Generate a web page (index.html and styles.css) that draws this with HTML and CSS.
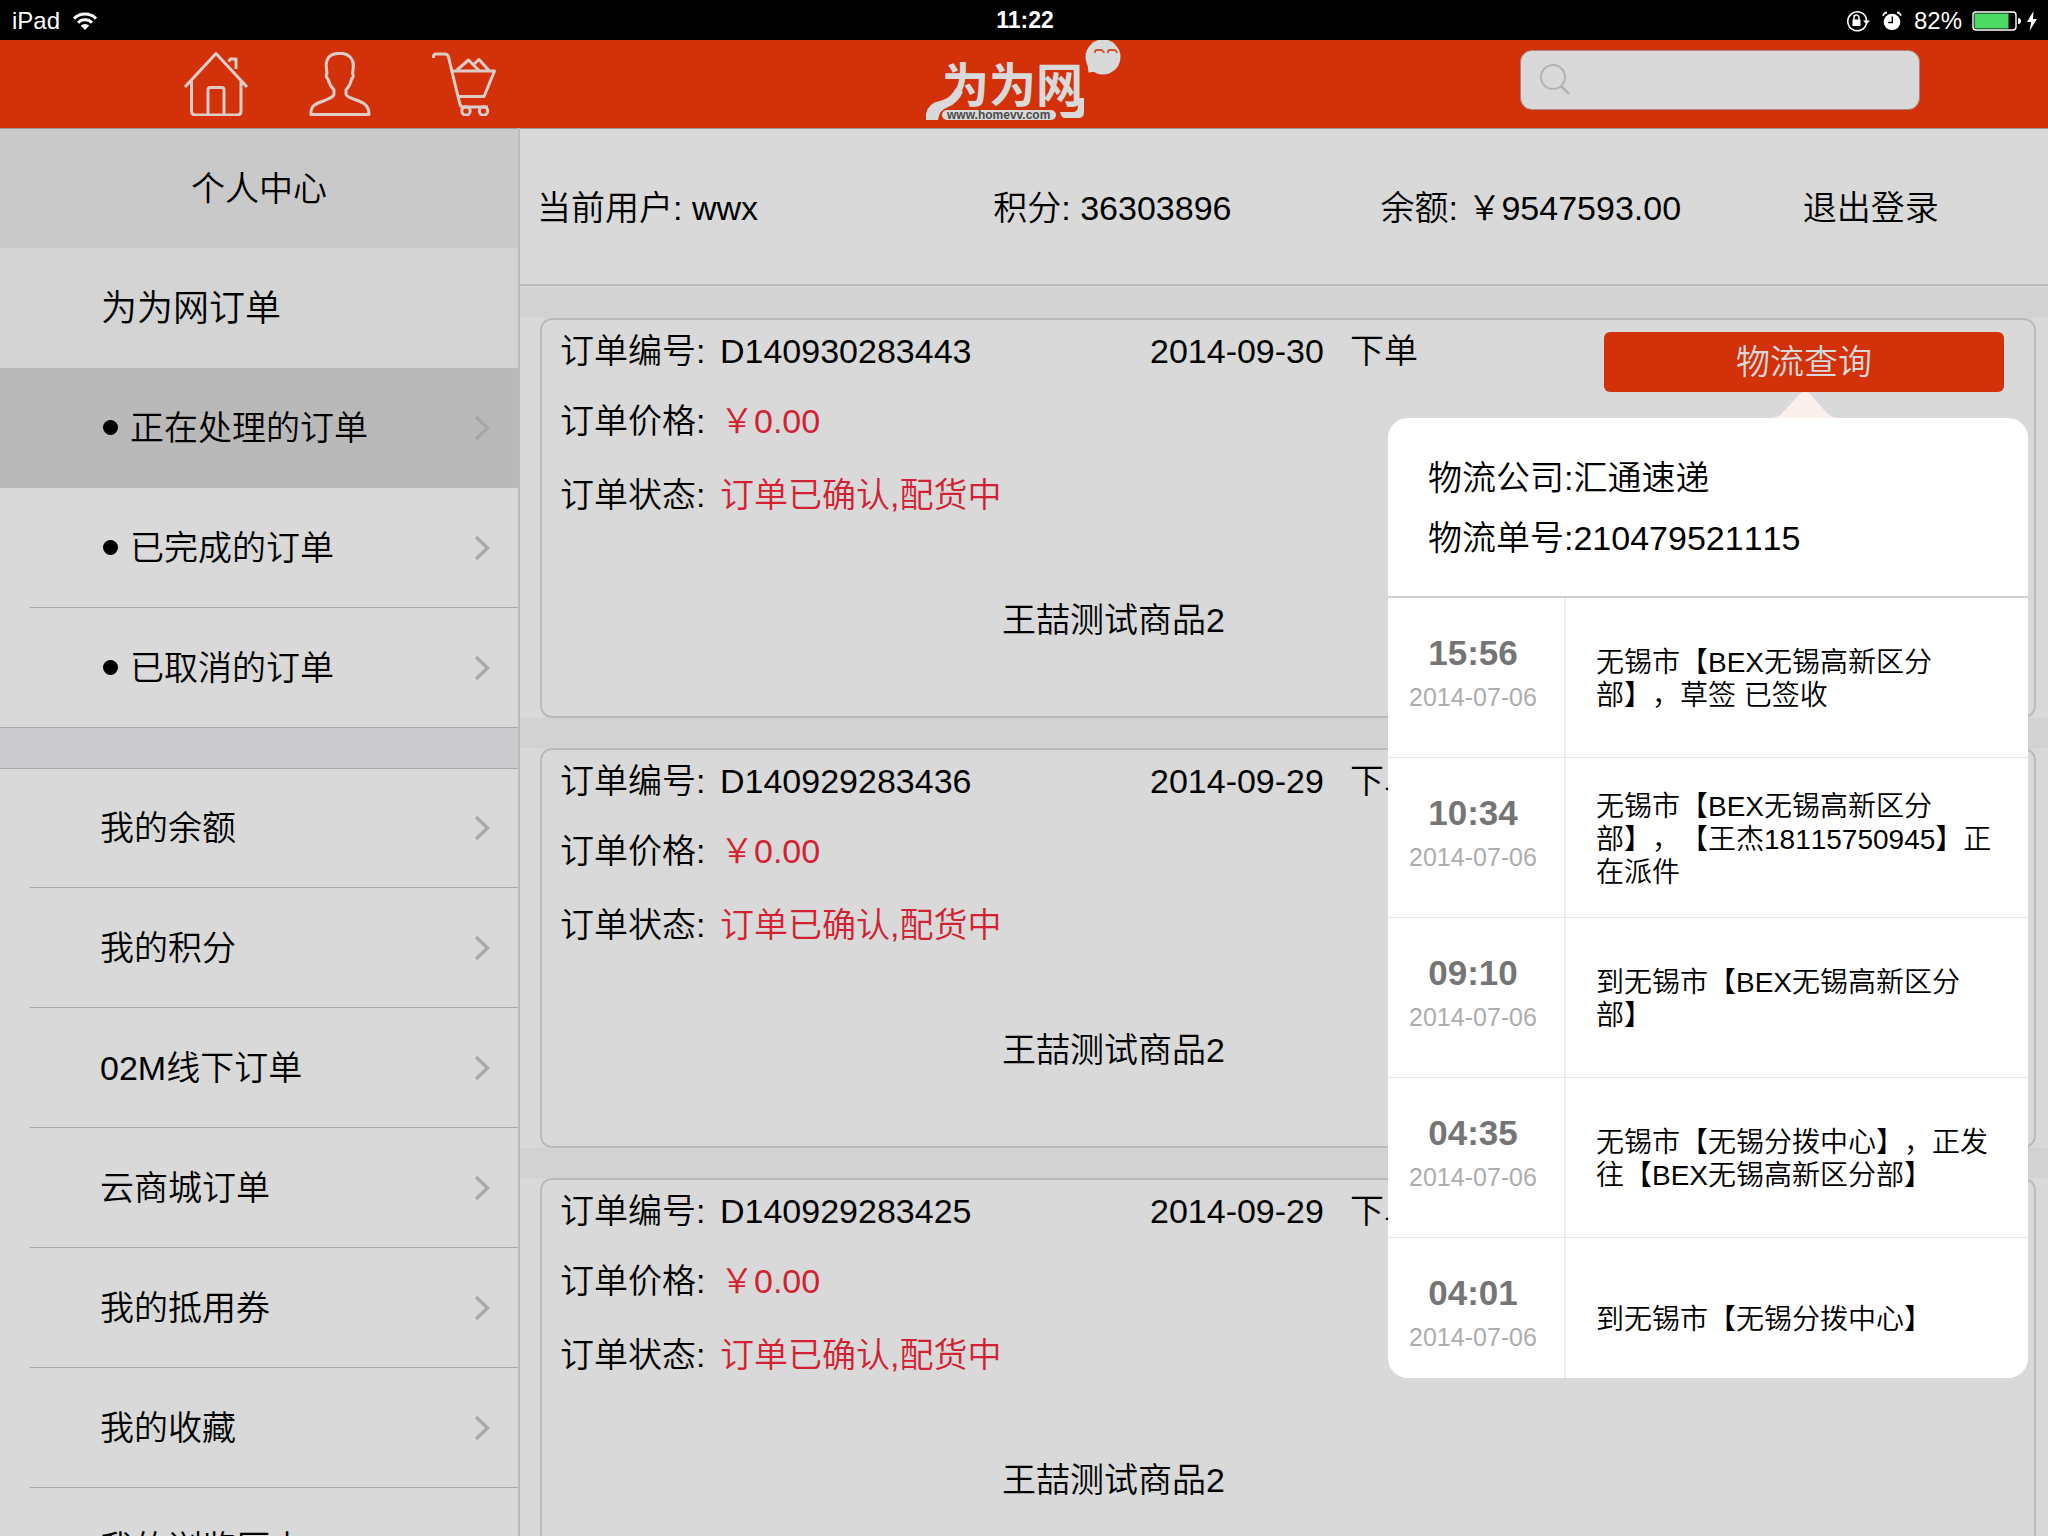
FILE: index.html
```html
<!DOCTYPE html>
<html lang="zh-CN">
<head>
<meta charset="utf-8">
<meta name="viewport" content="width=device-width, initial-scale=1">
<title>为为网 - 个人中心</title>
<link rel="stylesheet" href="styles.css">
</head>
<body>
<div class="status-bar">
  <div class="status-left">
    <span>iPad</span>
    <svg class="wifi" width="26" height="20" viewBox="0 0 26 20" aria-hidden="true">
      <path d="M2 7.6a15.6 15.6 0 0 1 22 0M6 11.8a9.8 9.8 0 0 1 14 0" fill="none" stroke="#fff" stroke-width="3"/>
      <path d="M13 19l-4.200-4.400a6 6 0 0 1 8.400 0z" fill="#fff"/>
    </svg>
  </div>
  <time class="clock">11:22</time>
  <div class="status-right">
    <svg width="24" height="22" viewBox="0 0 24 22" aria-hidden="true">
      <path d="M20.500 13.500A9.500 9.500 0 1 1 20 7.500L20.500 11" fill="none" stroke="#fff" stroke-width="1.600"/>
      <path d="M17 10.500h7l-3.500 4z" fill="#fff"/>
      <rect x="6.500" y="9.500" width="8" height="6.500" fill="#fff"/>
      <path d="M8 10V7.500a2.500 2.500 0 0 1 5 0V10" fill="none" stroke="#fff" stroke-width="1.500"/>
    </svg>
    <svg class="alarm" width="20" height="20" viewBox="0 0 20 20" aria-hidden="true">
      <circle cx="10" cy="11" r="8.300" fill="#fff"/>
      <path d="M1 4.800Q2 1.500 5 1.300M19 4.800Q18 1.500 15 1.300" fill="none" stroke="#fff" stroke-width="1.700"/>
      <path d="M10.300 5.500v6H6.200" fill="none" stroke="#000" stroke-width="1.500"/>
    </svg>
    <span>82%</span>
    <svg class="battery" width="50" height="20" viewBox="0 0 50 20" aria-hidden="true">
      <rect x="1" y="1" width="43" height="18" rx="3" fill="none" stroke="#fff" stroke-width="1.400"/>
      <rect x="2.500" y="2.500" width="34" height="15" fill="#4cd964"/>
      <path d="M46 7q3 0 3 3t-3 3z" fill="#fff"/>
    </svg>
    <svg width="12" height="20" viewBox="0 0 12 20" aria-hidden="true">
      <path d="M7.500 0L1 11h4.200L3.500 20 11 8H7z" fill="#fff"/>
    </svg>
  </div>
</div>

<header class="top-bar">
  <nav class="top-nav" aria-label="主导航">
    <a href="#home" aria-label="首页">
      <svg width="64" height="64" viewBox="0 0 64 64" class="line-icon">
        <path d="M1 35L32 1.500 63 35M7.500 29v30q0 4 4 4h41.500q4 0 4-4V29M24 63V38q0-2.500 2.500-2.500h11q2.500 0 2.500 2.500v25M44.500 9.500l2-2.500H52v10"/>
      </svg>
    </a>
    <a href="#me" aria-label="个人中心">
      <svg width="64" height="64" viewBox="0 0 64 64" class="line-icon">
        <path d="M3 62.500h58Q61.500 53 51 49C43 46 38.500 44.500 38 42.500V38c3-3.500 5-7 5.500-11 2-1.500 2-4 1-5.500 1.500-8 1.500-12.500-2-16C38 .5 34 1.500 32 1.500S25 .5 20.500 5.500C17.500 9.500 18 14 19 21.500c-1.500 2-.5 4.500 1 5.500 1 4 2.500 7.500 6 11v4.500C25.500 45 21 46.500 14 49.500 3.500 53 2.500 57 3 62.500z"/>
      </svg>
    </a>
    <a href="#cart" aria-label="购物车">
      <svg width="64" height="64" viewBox="0 0 64 64" class="line-icon">
        <path d="M1.500 6V3.500Q2 2 4 2h9q2.500 0 3.500 3L22 28l6 24.500q.8 2.500 3.500 2.500H56M20.500 19h42L52 44.500H26.500M25 18L36.500 8 47 18.500M42 12l5-4.500L57 18.500"/>
        <circle cx="34" cy="59" r="4.200"/><circle cx="51.500" cy="59" r="4.200"/>
      </svg>
    </a>
  </nav>

  <a class="logo" href="#home" aria-label="为为网">
    <svg width="196" height="84" viewBox="0 0 196 84">
      <text class="logo-name" x="16" y="62">为为网</text>
      <path class="logo-fill" d="M0 80V74Q2 63 14 61Q24 59 30 48L37 52Q32 63 22 67Q13 70 12 80z"/>
      <rect class="logo-fill" x="16" y="70" width="114" height="10" rx="5"/>
      <path class="logo-fill" d="M134 72h14q4-1 4-6v-8h6v14q0 6-6 6h-14q-3-1-4-6z"/>
      <text class="logo-url" x="21" y="79">www.homevv.com</text>
      <circle class="logo-fill" cx="177" cy="17" r="17.500"/>
      <path class="logo-fill" d="M161 21l1.500 11.500 8-1z"/>
      <path d="M169 13v-1q0-2 2-2h4q2 0 3 3M182 13v-1q0-2 2-2h4q2 0 3 3" fill="none" stroke="#d2512f" stroke-width="1.800"/>
    </svg>
  </a>

  <label class="search">
    <svg width="32" height="32" viewBox="0 0 32 32" aria-hidden="true">
      <circle cx="14" cy="13" r="12" fill="none" stroke="#b3b3b3" stroke-width="2"/>
      <path d="M22 22l8 8" stroke="#b3b3b3" stroke-width="2.500"/>
    </svg>
    <input type="search" aria-label="搜索">
  </label>
</header>

<div class="layout">
  <aside class="sidebar">
    <h1 class="side-title">个人中心</h1>
    <h2 class="side-group">为为网订单</h2>
    <ul class="side-list">
      <li class="active"><a href="#processing"><i class="dot"></i><span>正在处理的订单</span><svg class="chevron" viewBox="0 0 16 26"><path d="M2 2l11.500 11L2 24"/></svg></a></li>
      <li><a href="#done"><i class="dot"></i><span>已完成的订单</span><svg class="chevron" viewBox="0 0 16 26"><path d="M2 2l11.500 11L2 24"/></svg></a></li>
      <li class="group-end"><a href="#cancelled"><i class="dot"></i><span>已取消的订单</span><svg class="chevron" viewBox="0 0 16 26"><path d="M2 2l11.500 11L2 24"/></svg></a></li>
    </ul>
    <div class="side-gap"></div>
    <ul class="side-list">
      <li class="group-start"><a href="#balance"><span>我的余额</span><svg class="chevron" viewBox="0 0 16 26"><path d="M2 2l11.500 11L2 24"/></svg></a></li>
      <li><a href="#points"><span>我的积分</span><svg class="chevron" viewBox="0 0 16 26"><path d="M2 2l11.500 11L2 24"/></svg></a></li>
      <li><a href="#o2m"><span>02M线下订单</span><svg class="chevron" viewBox="0 0 16 26"><path d="M2 2l11.500 11L2 24"/></svg></a></li>
      <li><a href="#cloud"><span>云商城订单</span><svg class="chevron" viewBox="0 0 16 26"><path d="M2 2l11.500 11L2 24"/></svg></a></li>
      <li><a href="#coupon"><span>我的抵用券</span><svg class="chevron" viewBox="0 0 16 26"><path d="M2 2l11.500 11L2 24"/></svg></a></li>
      <li><a href="#favorite"><span>我的收藏</span><svg class="chevron" viewBox="0 0 16 26"><path d="M2 2l11.500 11L2 24"/></svg></a></li>
      <li><a href="#history"><span>我的浏览历史</span><svg class="chevron" viewBox="0 0 16 26"><path d="M2 2l11.500 11L2 24"/></svg></a></li>
    </ul>
  </aside>

  <main class="content">
    <section class="account">
      <span>当前用户: wwx</span>
      <span>积分: 36303896</span>
      <span>余额: ￥9547593.00</span>
      <a href="#logout">退出登录</a>
    </section>

    <ul class="orders">
      <li class="order-cell">
        <article class="order">
          <div class="order-info">
            <div class="order-head">
              <p class="field"><span class="label">订单编号:</span><span>D140930283443</span></p>
              <p class="placed"><time>2014-09-30</time><span>下单</span></p>
            </div>
            <p class="field price"><span class="label">订单价格:</span><span class="hot">￥0.00</span></p>
            <p class="field state"><span class="label">订单状态:</span><span class="hot">订单已确认,配货中</span></p>
            <p class="product">王喆测试商品2</p>
          </div>
          <div class="order-action">
            <button type="button" class="track">物流查询</button>
            <div class="popover" role="dialog" aria-label="物流查询">
              <svg class="arrow" width="68" height="26" viewBox="0 0 68 26" aria-hidden="true">
                <path d="M0 26Q8 26 12 20L27 4Q34-4 41 4L55 20Q60 26 68 26z" fill="#fcf0ed"/>
              </svg>
              <div class="popover-body">
                <div class="popover-head">
                  <p>物流公司:汇通速递</p>
                  <p>物流单号:210479521115</p>
                </div>
                <ol class="trace">
                  <li><div class="when"><b>15:56</b><span>2014-07-06</span></div><p>无锡市【BEX无锡高新区分<br>部】，草签 已签收</p></li>
                  <li><div class="when"><b>10:34</b><span>2014-07-06</span></div><p>无锡市【BEX无锡高新区分<br>部】，【王杰18115750945】正<br>在派件</p></li>
                  <li><div class="when"><b>09:10</b><span>2014-07-06</span></div><p>到无锡市【BEX无锡高新区分<br>部】</p></li>
                  <li><div class="when"><b>04:35</b><span>2014-07-06</span></div><p>无锡市【无锡分拨中心】，正发<br>往【BEX无锡高新区分部】</p></li>
                  <li><div class="when"><b>04:01</b><span>2014-07-06</span></div><p>到无锡市【无锡分拨中心】</p></li>
                </ol>
              </div>
            </div>
          </div>
        </article>
      </li>
      <li class="order-cell">
        <article class="order">
          <div class="order-info">
            <div class="order-head">
              <p class="field"><span class="label">订单编号:</span><span>D140929283436</span></p>
              <p class="placed"><time>2014-09-29</time><span>下单</span></p>
            </div>
            <p class="field price"><span class="label">订单价格:</span><span class="hot">￥0.00</span></p>
            <p class="field state"><span class="label">订单状态:</span><span class="hot">订单已确认,配货中</span></p>
            <p class="product">王喆测试商品2</p>
          </div>
          <div class="order-action"></div>
        </article>
      </li>
      <li class="order-cell">
        <article class="order">
          <div class="order-info">
            <div class="order-head">
              <p class="field"><span class="label">订单编号:</span><span>D140929283425</span></p>
              <p class="placed"><time>2014-09-29</time><span>下单</span></p>
            </div>
            <p class="field price"><span class="label">订单价格:</span><span class="hot">￥0.00</span></p>
            <p class="field state"><span class="label">订单状态:</span><span class="hot">订单已确认,配货中</span></p>
            <p class="product">王喆测试商品2</p>
          </div>
          <div class="order-action"></div>
        </article>
      </li>
    </ul>
  </main>
</div>
</body>
</html>
```

FILE: styles.css
```css
* { box-sizing: border-box; margin: 0; padding: 0; }

body {
  display: flex;
  flex-direction: column;
  height: 100vh;
  overflow: hidden;
  background: #d9d9d9;
  color: #000;
  font-family: "Liberation Sans", "Noto Sans CJK SC", sans-serif;
  font-size: 34px;
  font-weight: 350;
  line-height: 46px;
  text-spacing-trim: space-all;
}

ul, ol { list-style: none; }
a { color: inherit; text-decoration: none; }
svg { display: block; flex: none; }
h1, h2 { font-size: inherit; font-weight: inherit; }

/* Status bar */
.status-bar {
  display: grid;
  grid-template-columns: 1fr auto 1fr;
  align-items: center;
  flex: none;
  height: 40px;
  padding: 1px 10px 0 12px;
  background: #000;
  color: #fff;
  font-size: 24px;
  line-height: 39px;
}
.status-left, .status-right { display: flex; align-items: center; }
.status-left { gap: 12px; }
.status-right { justify-content: flex-end; gap: 4px; }
.clock { font-size: 23px; font-weight: 700; }
.alarm { margin: 0 8px; }
.battery { margin-left: 6px; }

/* Top bar */
.top-bar {
  display: grid;
  grid-template-columns: 1fr auto 1fr;
  flex: none;
  height: 88px;
  background: #d2310a;
}
.top-nav { display: flex; gap: 60px; padding: 12px 0 0 184px; }
.line-icon { fill: none; stroke: #dccdc9; stroke-width: 3; stroke-linejoin: round; }
.logo { height: 88px; }
.logo-fill, .logo-name { fill: #d9d9d9; }
.logo-name { font-family: "Noto Sans CJK SC", sans-serif; font-size: 47px; font-weight: 700; }
.logo-url { font-size: 12px; font-weight: 700; fill: #4a4a4a; }
.search {
  display: flex;
  align-items: center;
  justify-self: end;
  width: 400px;
  height: 60px;
  margin: 10px 128px 0 0;
  padding-left: 18px;
  border: 1px solid #a5857c;
  border-radius: 12px;
  background: #d9d9d9;
}
.search input {
  flex: 1;
  min-width: 0;
  height: 56px;
  padding: 0 12px;
  border: 0;
  outline: 0;
  background: none;
  font: inherit;
}

.layout { display: flex; flex: 1; min-height: 0; box-shadow: inset 0 1px 0 #999; }

/* Sidebar */
.sidebar {
  flex: none;
  width: 520px;
  overflow: hidden;
  border-right: 2px solid #bababa;
}
.side-title, .side-group { height: 120px; line-height: 120px; }
.side-title {
  border-top: 1px solid #999;
  background: #c9c9c9;
  text-align: center;
}
.side-group { padding: 1px 0 0 101px; background: #d4d4d4; font-size: 36px; }
.side-list li { padding-left: 30px; }
.side-list a {
  display: flex;
  align-items: center;
  height: 120px;
  padding: 0 28px 0 70px;
  border-bottom: 1px solid #a9a9ac;
}
.side-list .group-end { padding-left: 0; }
.side-list .group-end a { padding-left: 100px; }
.side-list .active { background: #b9b9b9; }
.side-list .active a { border-color: #b9b9b9; }
.side-list .active .chevron { stroke: #a6a6a9; }
.side-list .group-start { box-shadow: inset 0 1px 0 #a9a9ac; }
.dot { width: 15px; height: 15px; margin: 0 12px 0 3px; border-radius: 50%; background: #000; }
.chevron {
  width: 16px;
  height: 26px;
  margin-left: auto;
  fill: none;
  stroke: #a9a9ad;
  stroke-width: 3.500;
}
.side-gap { height: 40px; background: #cbcacf; }

/* Account strip */
.content { flex: 1; min-width: 0; }
.account {
  display: grid;
  grid-template-columns: 456fr 387fr 422fr 245fr;
  align-items: center;
  height: 158px;
  padding: 4px 0 0 17px;
  border-bottom: 2px solid #bababa;
  white-space: nowrap;
}

/* Orders */
.orders {
  display: flex;
  flex-direction: column;
  gap: 30px;
  margin-top: 2px;
  padding-top: 30px;
  background: #d2d2d2;
}
.order-cell { padding: 0 12px 0 20px; background: #d9d9d9; }
.order {
  display: flex;
  height: 400px;
  padding: 8px 30px 0 18px;
  border: 2px solid #bababa;
  border-radius: 12px;
}
.order-info { flex: 1; min-width: 0; white-space: nowrap; }
.order-head { display: grid; grid-template-columns: 590fr 454fr; }
.field { display: flex; }
.label { width: 160px; }
.price { margin-top: 24px; }
.state { margin-top: 28px; }
.hot { color: #d22132; }
.placed { display: flex; gap: 26px; }
.product { margin-top: 79px; padding-left: 442px; }
.order-action { position: relative; width: 400px; padding-top: 4px; }
.track {
  width: 100%;
  height: 60px;
  border: 0;
  border-radius: 6px;
  background: #d2310a;
  color: #d9d9d9;
  font: inherit;
}

/* Logistics popover */
.popover {
  position: absolute;
  z-index: 2;
  top: 64px;
  right: -24px;
  width: 640px;
  font-kerning: none;
}
.arrow { margin-left: 383px; }
.popover-body {
  height: 960px;
  overflow: hidden;
  border-radius: 20px;
  background: #fff;
}
.popover-head {
  display: flex;
  flex-direction: column;
  gap: 14px;
  height: 180px;
  padding: 37px 40px 0;
  border-bottom: 2px solid #d0d0d2;
}
.trace li {
  display: flex;
  align-items: center;
  height: 160px;
  border-bottom: 1px solid #e4e4e8;
}
.when {
  display: flex;
  flex-direction: column;
  align-items: center;
  align-self: stretch;
  width: 178px;
  padding: 32px 6px 0 0;
  border-right: 2px solid #efeff0;
  color: #adadad;
  font-size: 25px;
  line-height: 42px;
}
.when b { color: #757575; font-size: 35px; font-weight: 700; line-height: 46px; }
.trace p { padding: 3px 0 0 30px; font-size: 28px; line-height: 33px; white-space: nowrap; }
```
